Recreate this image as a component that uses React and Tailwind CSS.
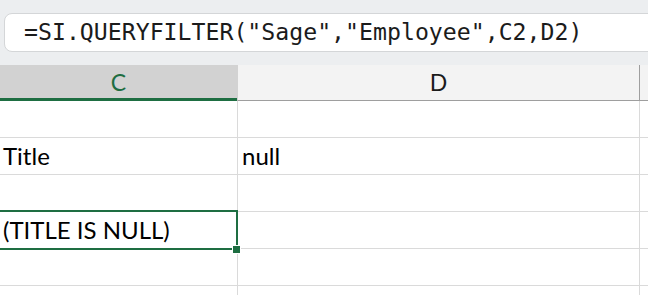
const rows = [
  { c: '', d: '' },
  { c: 'Title', d: 'null' },
  { c: '', d: '' },
  { c: '(TITLE IS NULL)', d: '', selected: true },
  { c: '', d: '' },
  { c: '', d: '' },
];

const cellFont = { fontFamily: 'Lato, "Open Sans", sans-serif' };

export default function App() {
  return (
    <div className="w-[648px] h-[295px] overflow-hidden bg-white" style={cellFont}>
      {/* formula bar */}
      <div className="h-[65px] bg-[#eceef0] pt-[13px] pl-[4px]">
        <div className="h-[39px] w-[700px] rounded-[8px] border border-[#d4d6d8] bg-white flex items-center pl-[19px]">
          <span
            className="text-[23.2px] text-[#1b1b1b] whitespace-pre"
            style={{ fontFamily: '"DejaVu Sans Mono", "Liberation Mono", monospace' }}
          >
            =SI.QUERYFILTER("Sage","Employee",C2,D2)
          </span>
        </div>
      </div>

      {/* column headers */}
      <div className="flex h-[36px]">
        <div className="w-[237px] shrink-0 bg-[#d2d2d2] border-b-[3px] border-[#1e6e42] flex items-center justify-center text-[23px] text-[#1e6e42] pt-[1px]">
          C
        </div>
        <div className="w-[402px] shrink-0 bg-[#f3f3f3] border-l border-[#d2d2d2] border-b border-b-[#9e9e9e] flex items-center justify-center text-[23px] text-[#1b1b1b]">
          D
        </div>
        <div className="flex-1 bg-[#f3f3f3] border-l border-[#9e9e9e] border-b border-b-[#9e9e9e]" />
      </div>

      {/* grid rows */}
      {rows.map((r, i) => (
        <div key={i} className="flex h-[37px] border-b border-[#dadada]">
          <div className="relative w-[237px] shrink-0 flex items-end pl-[3px] pb-[6px] text-[24px] leading-none text-black">
            {r.c}
            {r.selected && (
              <>
                <div className="absolute left-[-4px] top-[-2px] right-[-1px] bottom-[-2px] border-2 border-[#1e6e42] z-10" />
                <div className="absolute right-[-4px] bottom-[-6px] w-[9px] h-[9px] bg-[#1e6e42] border border-white z-20" />
              </>
            )}
          </div>
          <div className="w-[402px] shrink-0 border-l border-[#dadada] flex items-end pl-[4px] pb-[6px] text-[24px] leading-none text-black">
            {r.d}
          </div>
          <div className="flex-1 border-l border-[#dadada]" />
        </div>
      ))}
    </div>
  );
}
